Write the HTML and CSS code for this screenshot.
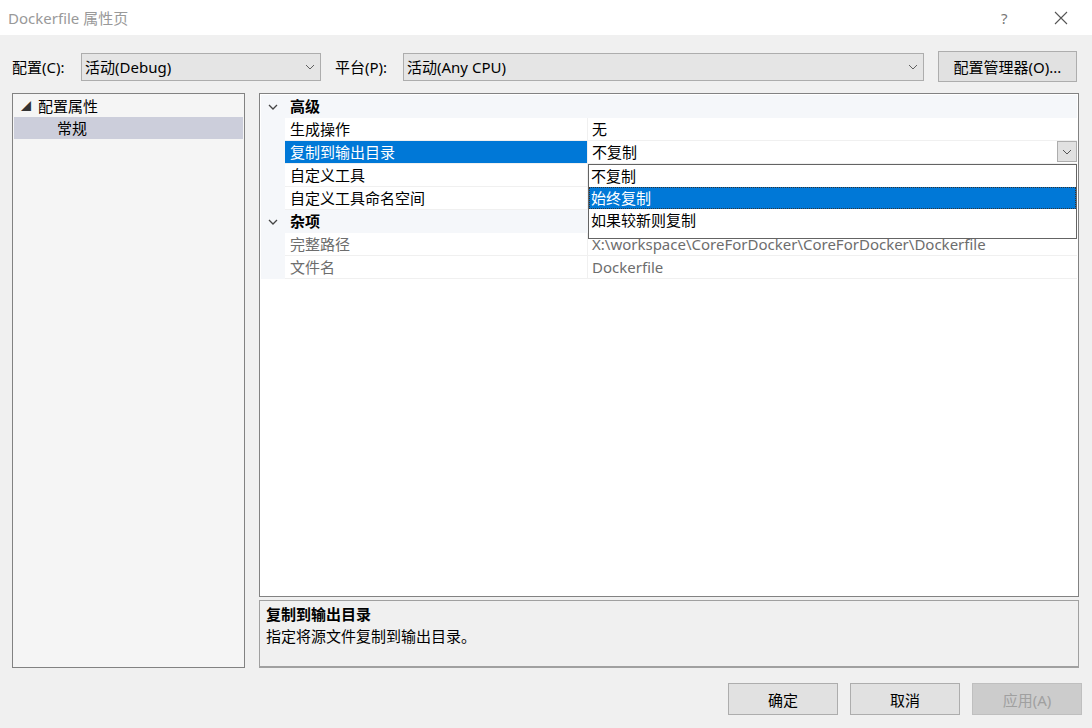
FILE: index.html
```html
<!DOCTYPE html>
<html lang="zh-CN">
  <head>
    <meta charset="UTF-8" />
    <title>Dockerfile 属性页</title>
    <link rel="stylesheet" href="styles.css">
  </head>
  <body>
    <div class="window">
      <div class="titlebar">
        <span class="title">Dockerfile 属性页</span>
        <span class="help">?</span>
        <span class="close">
          <svg width="14" height="14" viewBox="0 0 14 14"><path d="M1 1L13 13M13 1L1 13" stroke="#555" stroke-width="1.1" fill="none"/></svg>
        </span>
      </div>

      <div class="toolbar">
        <span class="label">配置(C):</span>
        <div class="combo combo-conf">
          <span>活动(Debug)</span>
          <svg class="chev" width="10" height="6" viewBox="0 0 10 6"><path d="M1 1L5 5L9 1" stroke="#606060" fill="none"/></svg>
        </div>
        <span class="label label-plat">平台(P):</span>
        <div class="combo combo-plat">
          <span>活动(Any CPU)</span>
          <svg class="chev" width="10" height="6" viewBox="0 0 10 6"><path d="M1 1L5 5L9 1" stroke="#606060" fill="none"/></svg>
        </div>
        <div class="btn btn-manager">配置管理器(O)...</div>
      </div>

      <div class="main">
        <div class="tree">
          <div class="tree-row"><span class="tri">◢</span>配置属性</div>
          <div class="tree-row child selected">常规</div>
        </div>

        <div class="right">
          <div class="grid">
            <div class="cat">
              <span class="gut"><svg width="10" height="6" viewBox="0 0 10 6"><path d="M1 1L5 5L9 1" stroke="#444" stroke-width="1.3" fill="none"/></svg></span>
              <span class="cat-name">高级</span>
            </div>
            <div class="prop">
              <span class="gut"></span><span class="name">生成操作</span><span class="val">无</span>
            </div>
            <div class="prop active">
              <span class="gut"></span><span class="name">复制到输出目录</span>
              <span class="val">不复制
                <span class="drop-btn"><svg width="10" height="6" viewBox="0 0 10 6"><path d="M1 1L5 5L9 1" stroke="#555" fill="none"/></svg></span>
              </span>
            </div>
            <div class="prop">
              <span class="gut"></span><span class="name">自定义工具</span><span class="val"></span>
            </div>
            <div class="prop">
              <span class="gut"></span><span class="name">自定义工具命名空间</span><span class="val"></span>
            </div>
            <div class="cat">
              <span class="gut"><svg width="10" height="6" viewBox="0 0 10 6"><path d="M1 1L5 5L9 1" stroke="#444" stroke-width="1.3" fill="none"/></svg></span>
              <span class="cat-name">杂项</span>
            </div>
            <div class="prop ro">
              <span class="gut"></span><span class="name">完整路径</span><span class="val">X:\workspace\CoreForDocker\CoreForDocker\Dockerfile</span>
            </div>
            <div class="prop ro">
              <span class="gut"></span><span class="name">文件名</span><span class="val">Dockerfile</span>
            </div>

            <ul class="dropdown">
              <li>不复制</li>
              <li class="hot">始终复制</li>
              <li>如果较新则复制</li>
            </ul>
          </div>

          <div class="desc">
            <div class="desc-title">复制到输出目录</div>
            <div class="desc-text">指定将源文件复制到输出目录。</div>
          </div>
        </div>
      </div>

      <div class="footer">
        <div class="btn btn-foot">确定</div>
        <div class="btn btn-foot">取消</div>
        <div class="btn btn-foot disabled">应用(A)</div>
      </div>
    </div>
  </body>
</html>
```

FILE: styles.css
```css
body {
  margin: 0;
  font-family: "Noto Sans", "Noto Sans CJK SC", sans-serif;
  font-size: 15px;
  color: #000;
}
.window {
  width: 1092px;
  height: 728px;
  background: #f0f0f0;
  overflow: hidden;
}

.titlebar {
  height: 35px;
  background: #fff;
  display: flex;
  align-items: center;
  padding-left: 8px;
}
.title {
  font-size: 15px;
  color: #999;
  flex: 1;
}
.help {
  color: #777;
  font-size: 15px;
  width: 53px;
}
.close {
  width: 38px;
  display: flex;
}

.toolbar {
  display: flex;
  align-items: center;
  padding: 16px 0 0 12px;
  height: 31px;
}
.label {
  width: 69px;
}
.label-plat {
  margin-left: 14px;
  width: 68px;
}
.combo {
  background: #e5e5e5;
  border: 1px solid #adadad;
  display: flex;
  align-items: center;
  padding-left: 3px;
  box-sizing: border-box;
  height: 28px;
}
.combo span {
  flex: 1;
}
.chev {
  margin-right: 5px;
}
.combo-conf {
  width: 240px;
}
.combo-plat {
  width: 521px;
}
.btn {
  background: #e1e1e1;
  border: 1px solid #adadad;
  display: flex;
  align-items: center;
  justify-content: center;
  box-sizing: border-box;
}
.btn-manager {
  margin-left: 14px;
  width: 139px;
  height: 31px;
}

.main {
  display: flex;
  padding: 11px 0 0 12px;
}
.tree {
  width: 233px;
  height: 575px;
  box-sizing: border-box;
  border: 1px solid #828282;
  background: #f5f5f5;
  padding: 1px;
}
.tree-row {
  height: 22px;
  line-height: 22px;
  padding-left: 24px;
  position: relative;
}
.tree-row.child {
  padding-left: 43px;
}
.tree-row.selected {
  background: #cccedb;
}
.tri {
  position: absolute;
  left: 7px;
  top: 0;
  font-size: 10px;
  color: #333;
}

.right {
  margin-left: 14px;
  width: 820px;
}
.grid {
  position: relative;
  height: 504px;
  box-sizing: border-box;
  border: 1px solid #828282;
  background: #fff;
  padding: 1px;
}
.cat, .prop {
  display: flex;
  height: 23px;
  line-height: 22px;
}
.cat {
  background: #f5f7fa;
  font-weight: bold;
}
.gut {
  width: 24px;
  background: #f5f7fa;
  display: flex;
  align-items: center;
  justify-content: center;
  flex: none;
}
.cat-name {
  padding-left: 5px;
}
.name {
  width: 303px;
  padding-left: 5px;
  box-sizing: border-box;
  border-bottom: 1px solid #f0f0f0;
  border-right: 1px solid #f0f0f0;
  flex: none;
}
.val {
  flex: 1;
  padding-left: 4px;
  border-bottom: 1px solid #f0f0f0;
  display: flex;
  align-items: flex-start;
}
.prop.active .name {
  background: #0078d7;
  color: #fff;
}
.prop.active .val {
  position: relative;
}
.drop-btn {
  position: absolute;
  right: 0;
  top: 0;
  width: 20px;
  height: 21px;
  background: #e1e1e1;
  border: 1px solid #adadad;
  box-sizing: border-box;
  display: flex;
  align-items: center;
  justify-content: center;
}
.prop.ro {
  color: #6d6d6d;
}

.dropdown {
  list-style: none;
  margin: 0;
  padding: 0 0 7px 0;
  position: absolute;
  left: 328px;
  top: 70px;
  width: 489px;
  background: #fff;
  border: 1px solid #646464;
  box-sizing: border-box;
}
.dropdown li {
  height: 22px;
  line-height: 22px;
  padding-left: 2px;
  box-sizing: border-box;
}
.dropdown li.hot {
  background: #0078d7;
  color: #fff;
  border: 1px dotted #333;
  line-height: 20px;
  padding-left: 1px;
}

.desc {
  margin-top: 3px;
  height: 68px;
  box-sizing: border-box;
  border: 1px solid #a0a0a0;
  border-bottom: 2px solid #a0a0a0;
  padding: 2px 6px;
}
.desc-title {
  font-weight: bold;
  line-height: 22px;
}
.desc-text {
  line-height: 22px;
}

.footer {
  display: flex;
  justify-content: flex-end;
  gap: 12px;
  padding: 15px 10px 0 0;
}
.btn-foot {
  width: 110px;
  height: 32px;
}
.btn.disabled {
  background: #cccccc;
  border-color: #bfbfbf;
  color: #a0a0a0;
}
```
